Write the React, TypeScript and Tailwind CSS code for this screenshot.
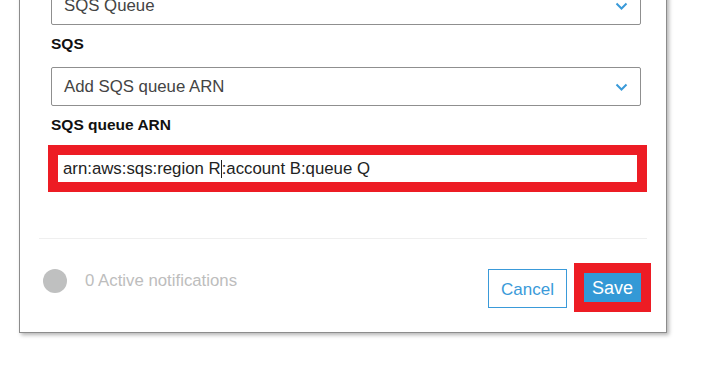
const font = { fontFamily: '"Liberation Sans", Arial, sans-serif' };

function Chevron() {
  return (
    <svg width="13" height="8" viewBox="0 0 13 8" className="shrink-0">
      <polyline points="1.5,1.5 6.5,6.5 11.5,1.5" fill="none" stroke="#3a9ad9" strokeWidth="2" />
    </svg>
  );
}

function SelectBox({ value }: { value: string }) {
  return (
    <div className="flex h-[39px] items-center justify-between rounded-[2px] border border-[#8f8f8f] bg-white pl-[12px] pr-[12px]">
      <span className="text-[16.8px] text-[#444]">{value}</span>
      <Chevron />
    </div>
  );
}

export default function App() {
  return (
    <div className="h-[376px] w-[708px] overflow-hidden bg-white" style={font}>
      <div className="ml-[19px] mt-[-15px] w-[648px] border border-[#8c8c8c] bg-white shadow-[2px_2px_4px_rgba(0,0,0,0.3)]">
        <div className="pl-[31px] pr-[25px]">
          <SelectBox value="SQS Queue" />

          <div className="mt-[9px] h-[20px] text-[15.5px] font-bold leading-[20px] text-[#111]">SQS</div>

          <div className="mt-[13px]">
            <SelectBox value="Add SQS queue ARN" />
          </div>

          <div className="mt-[9px] h-[20px] text-[15.5px] font-bold leading-[20px] text-[#111]">SQS queue ARN</div>

          <div className="-ml-[3px] -mr-[6px] mt-[10px] h-[47px] border-[10px] border-[#ed1c24] bg-white">
            <div className="flex h-full items-center pl-[5px] text-[16.8px] text-[#222]">
              <span>arn:aws:sqs:region R</span>
              <span className="h-[18px] w-px bg-[#222]" />
              <span>:account B:queue Q</span>
            </div>
          </div>
        </div>

        <div className="mx-[19px] mt-[46px] h-px bg-[#efefef]" />

        <div className="flex items-start justify-between pb-[20px] pl-[23px] pr-[15px]">
          <div className="mt-[30px] flex items-center">
            <div className="h-[24px] w-[24px] rounded-full bg-[#bfc0c0]" />
            <span className="ml-[18px] text-[16.8px] leading-[24px] text-[#bdbdbd]">0 Active notifications</span>
          </div>

          <div className="mt-[24px] flex items-start">
            <button
              type="button"
              className="mt-[6px] flex h-[39px] w-[79px] items-center justify-center border border-[#3a9ad9] bg-white pt-[2px] text-[17px] text-[#3a9ad9]"
            >
              Cancel
            </button>
            <div className="ml-[7px] h-[49px] w-[77px] border-[10px] border-[#ed1c24] bg-[#3399d6]">
              <div className="flex h-full items-center justify-center pt-[2px] text-[18px] text-white">Save</div>
            </div>
          </div>
        </div>
      </div>
    </div>
  );
}
